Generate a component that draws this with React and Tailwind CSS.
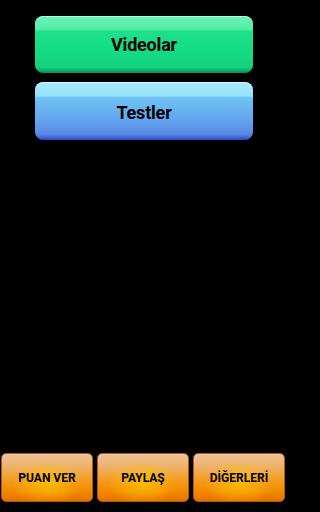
import React from 'react';

const bottomButtons = ['PUAN VER', 'PAYLAŞ', 'DİĞERLERİ'];

export default function App() {
  return (
    <div className="min-h-screen w-full bg-black">
      <div className="w-[288px] h-[512px] bg-black flex flex-col font-['Roboto','Liberation_Sans',sans-serif]">
        {/* Main menu */}
        <div className="flex flex-col items-center gap-[9px] pt-[16px]">
          <button className="w-[218px] h-[57px] rounded-[8px] bg-[linear-gradient(to_bottom,#6cf2b6_0%,#50eca4_24%,#1ee08c_27%,#14dc84_60%,#12d27c_90%,#0a8e52_100%)] shadow-[inset_0_1px_0_rgba(255,255,255,0.5)] text-black text-[18px] font-bold tracking-[-0.2px]">
            Videolar
          </button>
          <button className="w-[218px] h-[58px] rounded-[8px] bg-[linear-gradient(to_bottom,#aaeafe_0%,#98e0fc_24%,#6ec2f4_27%,#64aaee_60%,#5a88e6_90%,#2848c0_100%)] shadow-[inset_0_1px_0_rgba(255,255,255,0.5)] text-black text-[18px] font-bold tracking-[-0.2px] pt-[2px]">
            Testler
          </button>
        </div>

        {/* Bottom bar */}
        <div className="mt-auto flex gap-[4px] pl-[1px] pr-[3px] pb-[10px]">
          {bottomButtons.map(label => (
            <button
              key={label}
              className="relative flex-1 h-[49px] rounded-[5px] border border-[#b85a00] overflow-hidden bg-[linear-gradient(to_bottom,#ecc29a_0%,#eeb062_30%,#f29c20_55%,#f28c00_78%,#e47000_100%)] text-black text-[12px] font-bold"
            >
              <span className="absolute inset-0 bg-[radial-gradient(ellipse_at_50%_62%,rgba(255,196,0,0.8)_0%,rgba(255,190,0,0)_55%)]" />
              <span className="relative">{label}</span>
            </button>
          ))}
        </div>
      </div>
    </div>
  );
}
